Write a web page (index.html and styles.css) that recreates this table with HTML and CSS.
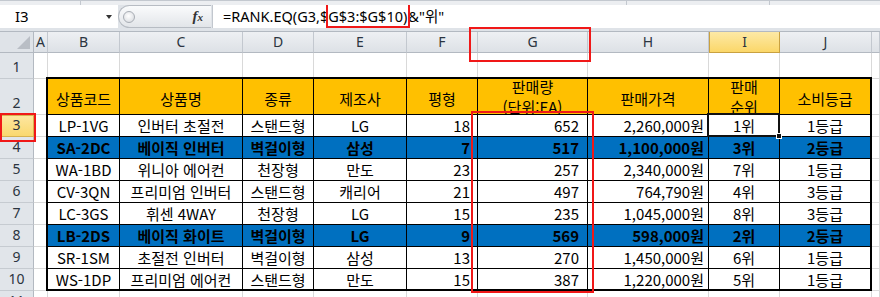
FILE: index.html
```html
<!DOCTYPE html>
<html lang="ko">
<head>
<meta charset="utf-8">
<title>RANK.EQ</title>
<link rel="stylesheet" href="styles.css">
</head>
<body>
<div class="toolbar">
  <div class="ribbon"><span class="tick t1"></span><span class="tick t2"></span><span class="tick t3"></span></div>
  <div class="bar">
    <div class="namebox"><span class="name">I3</span><span class="dd"></span></div>
    <div class="pill"><span class="knob"></span><span class="fx"><i>f</i><i class="x">x</i></span></div>
    <div class="formula">=RANK.EQ(G3,$<span class="hl">G$3:$G$10)</span>&amp;"위"</div>
  </div>
</div>
<div class="sheet">
  <div class="corner"><span class="tri"></span></div>
  <div class="ch">A</div><div class="ch">B</div><div class="ch">C</div><div class="ch">D</div><div class="ch">E</div><div class="ch">F</div><div class="ch">G</div><div class="ch">H</div><div class="ch sel">I</div><div class="ch">J</div><div class="ch"></div>

  <div class="rh">1</div><div class="c"></div><div class="c"></div><div class="c"></div><div class="c"></div><div class="c"></div><div class="c"></div><div class="c"></div><div class="c"></div><div class="c"></div><div class="c"></div><div class="c"></div>

  <div class="rh">2</div><div class="c"></div><div class="c"></div>
  <div class="rh sel">3</div><div class="c"></div><div class="c"></div>
  <div class="rh">4</div><div class="c"></div><div class="c"></div>
  <div class="rh">5</div><div class="c"></div><div class="c"></div>
  <div class="rh">6</div><div class="c"></div><div class="c"></div>
  <div class="rh">7</div><div class="c"></div><div class="c"></div>
  <div class="rh">8</div><div class="c"></div><div class="c"></div>
  <div class="rh">9</div><div class="c"></div><div class="c"></div>
  <div class="rh">10</div><div class="c"></div><div class="c"></div>

  <div class="rh">11</div><div class="c"></div><div class="c"></div><div class="c"></div><div class="c"></div><div class="c"></div><div class="c"></div><div class="c"></div><div class="c"></div><div class="c"></div><div class="c"></div><div class="c"></div>

  <div class="tbl">
    <div class="th">상품코드</div><div class="th">상품명</div><div class="th">종류</div><div class="th">제조사</div><div class="th">평형</div><div class="th two">판매량<br>(단위:EA)</div><div class="th">판매가격</div><div class="th two">판매<br>순위</div><div class="th last">소비등급</div>

    <div class="td">LP-1VG</div><div class="td">인버터 초절전</div><div class="td">스탠드형</div><div class="td">LG</div><div class="td num">18</div><div class="td num g">652</div><div class="td won">2,260,000원</div><div class="td cur">1위<span class="selbox"><span class="handle"></span></span></div><div class="td last">1등급</div>

    <div class="td hi">SA-2DC</div><div class="td hi">베이직 인버터</div><div class="td hi">벽걸이형</div><div class="td hi">삼성</div><div class="td hi num">7</div><div class="td hi num g">517</div><div class="td hi won">1,100,000원</div><div class="td hi">3위</div><div class="td hi last">2등급</div>

    <div class="td">WA-1BD</div><div class="td">위니아 에어컨</div><div class="td">천장형</div><div class="td">만도</div><div class="td num">23</div><div class="td num g">257</div><div class="td won">2,340,000원</div><div class="td">7위</div><div class="td last">1등급</div>

    <div class="td">CV-3QN</div><div class="td">프리미엄 인버터</div><div class="td">스탠드형</div><div class="td">캐리어</div><div class="td num">21</div><div class="td num g">497</div><div class="td won">764,790원</div><div class="td">4위</div><div class="td last">3등급</div>

    <div class="td">LC-3GS</div><div class="td">휘센 4WAY</div><div class="td">천장형</div><div class="td">LG</div><div class="td num">15</div><div class="td num g">235</div><div class="td won">1,045,000원</div><div class="td">8위</div><div class="td last">3등급</div>

    <div class="td hi">LB-2DS</div><div class="td hi">베이직 화이트</div><div class="td hi">벽걸이형</div><div class="td hi">LG</div><div class="td hi num">9</div><div class="td hi num g">569</div><div class="td hi won">598,000원</div><div class="td hi">2위</div><div class="td hi last">2등급</div>

    <div class="td">SR-1SM</div><div class="td">초절전 인버터</div><div class="td">벽걸이형</div><div class="td">삼성</div><div class="td num">13</div><div class="td num g">270</div><div class="td won">1,450,000원</div><div class="td">6위</div><div class="td last">1등급</div>

    <div class="td bot">WS-1DP</div><div class="td bot">프리미엄 에어컨</div><div class="td bot">스탠드형</div><div class="td bot">만도</div><div class="td bot num">15</div><div class="td bot num g">387</div><div class="td bot won">1,220,000원</div><div class="td bot">5위</div><div class="td bot last">1등급</div>
  </div>
</div>

<div class="mark m-head"></div>
<div class="mark m-data"></div>
<div class="mark m-row"></div>
</body>
</html>
```

FILE: styles.css
```css
* { box-sizing: border-box; }
html, body { margin: 0; padding: 0; background: #fff; }
body {
  width: 880px;
  height: 297px;
  overflow: hidden;
  position: relative;
  font-family: "Noto Sans", "Noto Sans CJK KR", sans-serif;
  color: #000;
}

/* ---------- formula bar ---------- */
.toolbar {
  height: 32px;
  background: #dfe3e8;
  border-bottom: 1px solid #b3b9c1;
  display: flex;
  flex-direction: column;
}
.ribbon {
  height: 5px;
  background: #eceef1;
  border-top: 1px solid #c3c8cf;
  position: relative;
}
.tick { position: absolute; top: 0; width: 1px; height: 4px; background: #c3c8cf; }
.t1 { left: 80px; }
.t2 { left: 626px; }
.t3 { left: 769px; }
.bar { height: 23px; display: flex; }
.namebox {
  width: 118px;
  background: #fff;
  display: flex;
  align-items: center;
  padding-left: 15px;
}
.name { font-size: 15px; line-height: 23px; color: #000; }
.dd {
  margin-left: auto;
  margin-right: 6px;
  width: 0; height: 0;
  border-left: 3.5px solid transparent;
  border-right: 3.5px solid transparent;
  border-top: 4px solid #333;
}
.pill {
  width: 93px;
  background: linear-gradient(#fafbfc, #e2e5e9);
  border: 1px solid #b7bcc3;
  border-right: none;
  border-radius: 12px 0 0 12px;
  display: flex;
  align-items: center;
  padding-left: 4px;
  padding-right: 8px;
}
.knob {
  width: 12px; height: 12px;
  border-radius: 50%;
  background: radial-gradient(circle at 45% 40%, #ffffff, #d3d6db);
  border: 1px solid #a8adb4;
}
.fx {
  margin-left: auto;
  font-family: "Liberation Serif", serif;
  font-weight: bold;
  color: #333;
  font-size: 15px;
  line-height: 1;
}
.fx .x { font-size: 11px; }
.formula {
  flex: 1;
  background: #fff;
  border-left: 1px solid #c2c7ce;
  margin-left: 1px;
  padding-left: 10px;
  font-size: 14.5px;
  line-height: 23px;
  white-space: nowrap;
}
.hl {
  outline: 2px solid #f01818;
  padding: 3px 1px 0 0;
}

/* ---------- sheet ---------- */
.sheet {
  display: grid;
  grid-template-columns: 34px 14px 72px 123px 71px 93px 71px 110px 121px 71px 92px 1fr;
  grid-template-rows: 21px 26px 36px repeat(8, 22px) 22px;
}
.c {
  border-right: 1px solid #d9d9d9;
  border-bottom: 1px solid #d9d9d9;
}
.corner {
  background: #dfe3e8;
  border-right: 1px solid #b3b9c1;
  border-bottom: 1px solid #b3b9c1;
  position: relative;
}
.tri {
  position: absolute;
  right: 3px; bottom: 3px;
  width: 0; height: 0;
  border-left: 13px solid transparent;
  border-bottom: 13px solid #b9bec5;
}
.ch {
  background: linear-gradient(#eef0f3, #dde1e6);
  border-right: 1px solid #c3c8cf;
  border-bottom: 1px solid #b3b9c1;
  font-size: 14px;
  line-height: 20px;
  text-align: center;
  color: #2b3440;
}
.rh {
  background: #e1e5ea;
  border-right: 1px solid #b3b9c1;
  border-bottom: 1px solid #c6cbd1;
  font-size: 14px;
  color: #2b3440;
  display: flex;
  align-items: flex-end;
  justify-content: center;
  padding-bottom: 1px;
  line-height: 20px;
}
.ch.sel {
  background: linear-gradient(#fde9a6, #fbd769);
  border: 1px solid #c9a140;
  border-top: none;
}
.rh.sel {
  background: linear-gradient(#fde6a0, #fad86e);
  border-right: 1px solid #d7b24f;
  border-bottom: 1px solid #d7b24f;
  border-top: 1px solid #d7b24f;
}

/* ---------- data table ---------- */
.tbl {
  grid-column: 3 / 12;
  grid-row: 3 / 11;
  grid-row-end: 12;
  margin: -2px 0 0 -2px;
  border: 2px solid #000;
  display: grid;
  grid-template-columns: 72px 123px 71px 93px 71px 110px 121px 71px 90px;
  grid-template-rows: 36px repeat(7, 22px) 20px;
  background: #fff;
  font-family: "Noto Sans CJK KR", "Noto Sans", sans-serif;
  font-size: 15px;
}
.th, .td {
  border-right: 1px solid #000;
  border-bottom: 1px solid #000;
  text-align: center;
  white-space: nowrap;
  overflow: hidden;
}
.th {
  background: #ffc000;
  line-height: 21px;
  padding-top: 9px;
}
.th.two {
  line-height: 20px;
  padding-top: 0;
  display: flex;
  align-items: center;
  justify-content: center;
}
.td { line-height: 21px; }
.last { border-right: none; }
.bot { border-bottom: none; }
.num { text-align: right; padding-right: 7px; }
.num.g { padding-right: 8px; }
.won { text-align: right; padding-right: 4px; }
.hi { background: #0070c0; font-weight: bold; }
.cur { position: relative; overflow: visible; }
.selbox {
  position: absolute;
  left: -2px; top: -2px; right: -1px; bottom: -1px;
  border: 2px solid #111;
  pointer-events: none;
}
.handle {
  position: absolute;
  right: -4px; bottom: -4px;
  width: 6px; height: 6px;
  background: #111;
  border: 1px solid #fff;
}

/* ---------- red annotation marks ---------- */
.mark {
  position: absolute;
  border: 2px solid #f01818;
}
.m-head { left: 469px; top: 27px; width: 122px; height: 35px; }
.m-data { left: 471px; top: 111px; width: 123px; height: 182px; }
.m-row { left: 0; top: 113px; width: 36px; height: 29px; }
```
